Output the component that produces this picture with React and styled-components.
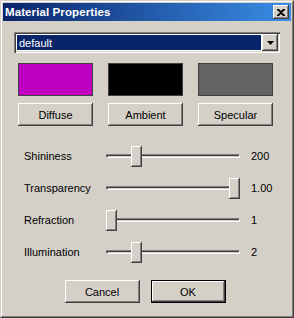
import React from "react";
import styled, { createGlobalStyle } from "styled-components";

const Global = createGlobalStyle`
  html, body { margin: 0; padding: 0; background: #d4d0c8; }
  body { font-family: Tahoma, "DejaVu Sans", "Liberation Sans", sans-serif; font-size: 11px; }
  * { box-sizing: border-box; }
`;

const Window = styled.div`
  width: 294px;
  height: 318px;
  background: #d4d0c8;
  border-top: 1px solid #d4d0c8;
  border-left: 1px solid #d4d0c8;
  border-right: 1px solid #404040;
  border-bottom: 1px solid #404040;
  display: flex;
  flex-direction: column;
`;

const Inner = styled.div`
  flex: 1;
  display: flex;
  flex-direction: column;
  border-top: 1px solid #ffffff;
  border-left: 1px solid #ffffff;
  border-right: 1px solid #808080;
  border-bottom: 1px solid #808080;
  padding: 1px;
`;

const TitleBar = styled.div`
  height: 18px;
  display: flex;
  align-items: center;
  justify-content: space-between;
  padding: 0 2px 0 2px;
  background: linear-gradient(to right, #0a246a, #3a8ee6);
`;

const TitleText = styled.span`
  color: #ffffff;
  font-family: "Liberation Sans", Arial, sans-serif;
  font-weight: bold;
  font-size: 11.5px;
  letter-spacing: 0.1px;
`;

const CloseButton = styled.div`
  width: 16px;
  height: 14px;
  background: #d4d0c8;
  box-shadow: inset -1px -1px #404040, inset 1px 1px #ffffff, inset -2px -2px #808080;
  display: flex;
  align-items: center;
  justify-content: center;
`;

const Body = styled.div`
  flex: 1;
  display: flex;
  flex-direction: column;
  padding: 11px 11px 0 11px;
`;

const Combo = styled.div`
  height: 21px;
  display: flex;
  align-items: stretch;
  padding: 2px;
  background: #ffffff;
  box-shadow: inset 1px 1px #808080, inset 2px 2px #404040, inset -1px -1px #ffffff, inset -2px -2px #d4d0c8;
`;

const ComboText = styled.div`
  flex: 1;
  margin: 1px 1px 1px 1px;
  background: #0a246a;
  color: #ffffff;
  font-family: "Liberation Sans", Arial, sans-serif;
  font-size: 11px;
  display: flex;
  align-items: center;
  padding-left: 2px;
`;

const ComboButton = styled.div`
  width: 16px;
  background: #d4d0c8;
  box-shadow: inset -1px -1px #404040, inset 1px 1px #ffffff, inset -2px -2px #808080;
  display: flex;
  align-items: center;
  justify-content: center;
`;

const SwatchGrid = styled.div`
  display: grid;
  grid-template-columns: repeat(3, 75px);
  column-gap: 15px;
  row-gap: 7px;
  margin: 10px 0 0 4px;
`;

const Swatch = styled.div`
  height: 33px;
  background: ${(p) => p.$color};
  border: 1px solid #404040;
`;

const Button = styled.div`
  width: 75px;
  height: 23px;
  display: flex;
  align-items: center;
  justify-content: center;
  font-family: "Liberation Sans", Arial, sans-serif;
  font-size: 11px;
  color: #000;
  background: #d4d0c8;
  border: ${(p) => (p.$default ? "1px solid #000" : "none")};
  box-shadow: inset -1px -1px #404040, inset 1px 1px #ffffff, inset -2px -2px #808080;
`;

const Sliders = styled.div`
  display: flex;
  flex-direction: column;
  margin-top: 14px;
`;

const SliderRow = styled.div`
  height: 32px;
  display: grid;
  grid-template-columns: 82px 134px auto;
  align-items: center;
  padding-left: 10px;
  font-family: "Liberation Sans", Arial, sans-serif;
  font-size: 11px;
  color: #000;
`;

const Label = styled.span``;

const Value = styled.span`
  padding-left: 11px;
`;

const SliderBox = styled.div`
  position: relative;
  height: 21px;
  display: flex;
  align-items: center;
`;

const Track = styled.div`
  width: 100%;
  height: 4px;
  border-top: 1px solid #808080;
  border-left: 1px solid #808080;
  border-right: 1px solid #ffffff;
  border-bottom: 1px solid #ffffff;
  box-shadow: inset 1px 1px #404040, inset -1px -1px #d4d0c8;
`;

const Thumb = styled.div`
  position: absolute;
  top: 0;
  width: 11px;
  height: 21px;
  background: #d4d0c8;
  box-shadow: inset -1px -1px #404040, inset 1px 1px #ffffff, inset -2px -2px #808080;
`;

const Footer = styled.div`
  display: flex;
  justify-content: center;
  gap: 11px;
  margin-top: 12px;
  padding-right: 4px;
`;

const sliders = [
  { label: "Shininess", value: "200", pos: 0.2 },
  { label: "Transparency", value: "1.00", pos: 1 },
  { label: "Refraction", value: "1", pos: 0 },
  { label: "Illumination", value: "2", pos: 0.2 },
];

export default function App() {
  return (
    <>
      <Global />
      <Window>
        <Inner>
          <TitleBar>
            <TitleText>Material Properties</TitleText>
            <CloseButton>
              <svg width="8" height="7" viewBox="0 0 8 7">
                <path d="M0 0h2l2 2 2-2h2v1L5 3.5 8 6v1H6L4 5 2 7H0V6l3-2.5L0 1z" fill="#000" />
              </svg>
            </CloseButton>
          </TitleBar>
          <Body>
            <Combo>
              <ComboText>default</ComboText>
              <ComboButton>
                <svg width="7" height="4" viewBox="0 0 7 4">
                  <path d="M0 0h7L3.5 4z" fill="#000" />
                </svg>
              </ComboButton>
            </Combo>
            <SwatchGrid>
              <Swatch $color="#c000c0" />
              <Swatch $color="#000000" />
              <Swatch $color="#646464" />
              <Button>Diffuse</Button>
              <Button>Ambient</Button>
              <Button>Specular</Button>
            </SwatchGrid>
            <Sliders>
              {sliders.map((s) => (
                <SliderRow key={s.label}>
                  <Label>{s.label}</Label>
                  <SliderBox>
                    <Track />
                    <Thumb style={{ left: `${s.pos * 123}px` }} />
                  </SliderBox>
                  <Value>{s.value}</Value>
                </SliderRow>
              ))}
            </Sliders>
            <Footer>
              <Button>Cancel</Button>
              <Button $default>OK</Button>
            </Footer>
          </Body>
        </Inner>
      </Window>
    </>
  );
}
